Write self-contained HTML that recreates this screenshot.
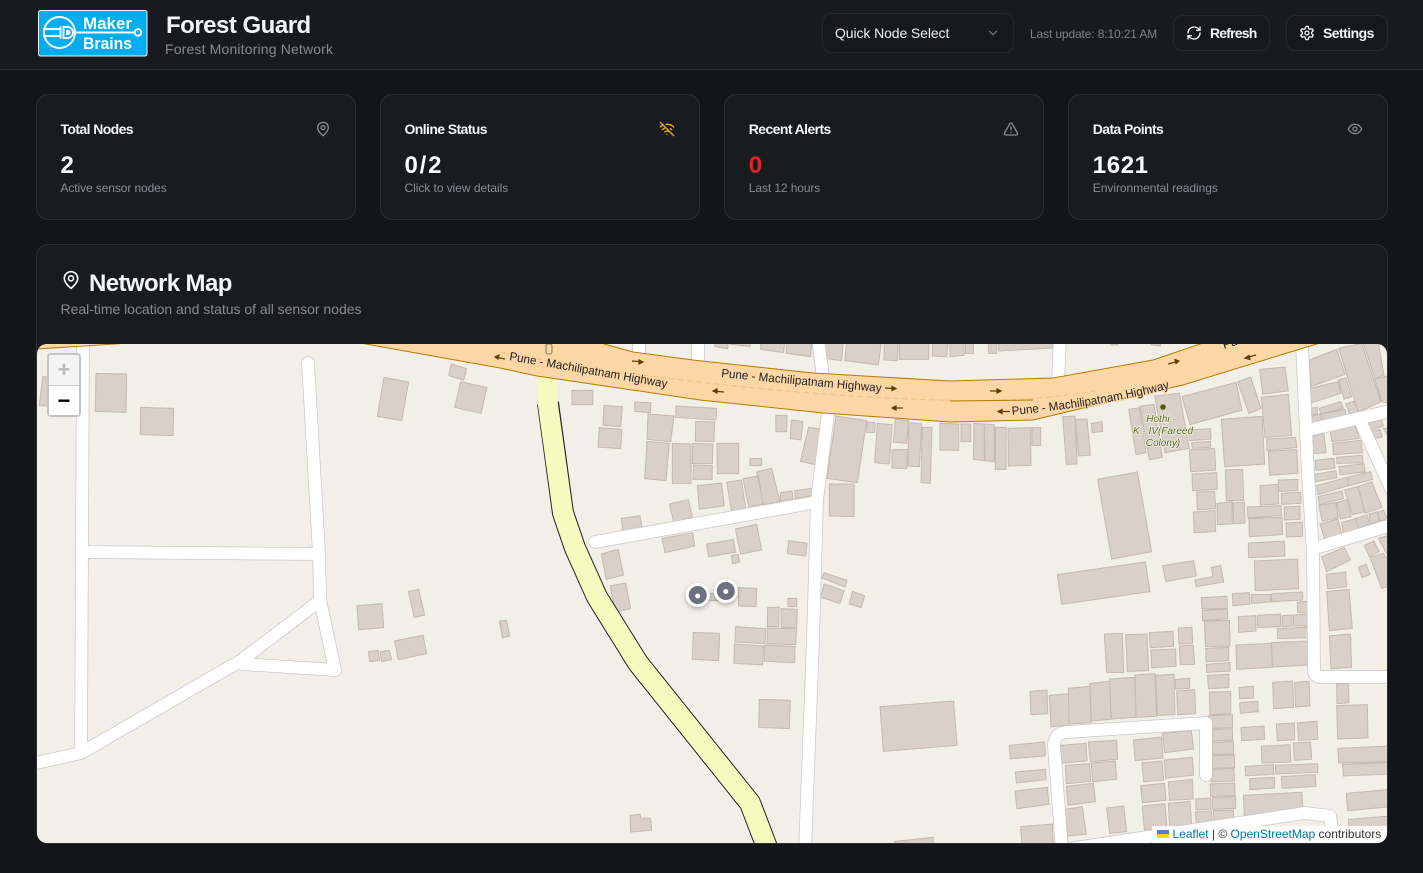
<!DOCTYPE html>
<html lang="en"><head><meta charset="utf-8"><title>Forest Guard</title>
<style>
*{box-sizing:border-box;margin:0;padding:0}
html,body{width:1423px;height:873px;overflow:hidden;background:#131519;font-family:"Liberation Sans",sans-serif;color:#f5f6f7}
.a{position:absolute;white-space:nowrap}
.hdr{left:0;top:0;width:1423px;height:70px;background:#181a1f;border-bottom:1px solid #2a2d33}
.box{border:1px solid #24272d;background:#16181c;border-radius:10px}
.card{top:94px;width:320px;height:126px;background:#181c21;border:1px solid #2a2e35;border-radius:12px}
.ct{font-size:14px;line-height:20px;font-weight:700;letter-spacing:-.6px;top:119px;color:#f3f5f7}
.cv{font-size:24px;line-height:32px;font-weight:700;top:150px;color:#fbfcfd;letter-spacing:.6px}
.cs{font-size:12px;line-height:16px;top:180px;color:#878d97;letter-spacing:-.05px}
svg.i{position:absolute;fill:none;stroke:currentColor;stroke-width:2;stroke-linecap:round;stroke-linejoin:round}
.btn{font-size:14px;font-weight:700;line-height:20px;letter-spacing:-.55px;top:23px;color:#f3f5f7}
.lbl{font:12px "Liberation Sans",sans-serif;fill:#222;paint-order:stroke;stroke:#fcd6a4;stroke-width:2.5px}
.zc{left:47px;top:353px;width:34px;height:64px;border:2px solid #c4c4c4;border-radius:4px;background:#fff;overflow:hidden}
.zc div{height:30px;text-align:center;font:700 22px/34px "Liberation Mono",monospace;color:#000;background:#fff}
.attr{right:36px;top:826px;height:17px;width:235.5px;background:rgba(255,255,255,.85);font-size:12px;line-height:16px;color:#333;padding-left:5px;border-bottom-right-radius:10px}
.attr span{color:#0078a8}
</style></head><body>
<div class="a hdr"></div>

<svg class="a" style="left:38px;top:10px" width="110" height="47" viewBox="38 10 110 47">
<rect x="38.500" y="10.500" width="108.500" height="45.500" rx="2" fill="#00aeef" stroke="#e8f6fd"/>
<g fill="none" stroke="#fff" stroke-width="1.900">
<circle cx="59.500" cy="32.500" r="15.500"/>
<path d="M43 29H60M43 36H60M60.500 26.500V38.500M72 32.500H134"/>
<circle cx="138" cy="32.500" r="3.300"/>
<path d="M63.500 27V38H67.500C70.500 38 73 35.500 73 32.500C73 29.500 70.500 27 67.500 27Z"/>
</g>
<path d="M66 30H68C69.500 30 70.500 31.300 70.500 32.500C70.500 33.700 69.500 35 68 35H66Z" fill="#fff"/>
<text x="83" y="29" font-size="17" font-weight="700" fill="#fff" textLength="49" lengthAdjust="spacingAndGlyphs">Maker</text>
<text x="83" y="49" font-size="17" font-weight="700" fill="#fff" textLength="49" lengthAdjust="spacingAndGlyphs">Brains</text>
</svg>
<div class="a" style="left:166px;top:10px;font-size:24px;line-height:32px;font-weight:700;color:#f4f5f6;letter-spacing:-.5px">Forest Guard</div>
<div class="a" style="left:165px;top:39px;font-size:14px;line-height:20px;color:#858a93;letter-spacing:.16px">Forest Monitoring Network</div>

<div class="a box" style="left:822px;top:13px;width:192px;height:40px"></div>
<div class="a" style="left:835px;top:23px;font-size:14px;line-height:20px;color:#eceef0;letter-spacing:-.1px">Quick Node Select</div>
<svg class="i" style="left:986px;top:26px;color:#7b8089" width="14" height="14" viewBox="0 0 24 24"><path d="m6 9 6 6 6-6"/></svg>
<div class="a" style="left:1030px;top:26px;font-size:12px;line-height:16px;color:#7d828b;letter-spacing:-.13px">Last update: 8:10:21 AM</div>

<div class="a box" style="left:1173px;top:15px;width:97px;height:36px"></div>
<svg class="i" style="left:1186px;top:25px;color:#f3f5f7" width="16" height="16" viewBox="0 0 24 24"><path d="M3 12a9 9 0 0 1 9-9 9.750 9.750 0 0 1 6.740 2.740L21 8"/><path d="M21 3v5h-5"/><path d="M21 12a9 9 0 0 1-9 9 9.750 9.750 0 0 1-6.740-2.740L3 16"/><path d="M8 16H3v5"/></svg>
<div class="a btn" style="left:1210px;letter-spacing:-.8px">Refresh</div>
<div class="a box" style="left:1286px;top:15px;width:102px;height:36px"></div>
<svg class="i" style="left:1299px;top:25px;color:#f3f5f7" width="16" height="16" viewBox="0 0 24 24"><path d="M12.220 2h-.44a2 2 0 0 0-2 2v.18a2 2 0 0 1-1 1.730l-.43.25a2 2 0 0 1-2 0l-.15-.08a2 2 0 0 0-2.730.73l-.22.38a2 2 0 0 0 .73 2.730l.15.1a2 2 0 0 1 1 1.720v.51a2 2 0 0 1-1 1.740l-.15.09a2 2 0 0 0-.73 2.730l.22.38a2 2 0 0 0 2.730.73l.15-.08a2 2 0 0 1 2 0l.43.25a2 2 0 0 1 1 1.730V20a2 2 0 0 0 2 2h.44a2 2 0 0 0 2-2v-.18a2 2 0 0 1 1-1.730l.43-.25a2 2 0 0 1 2 0l.15.08a2 2 0 0 0 2.730-.73l.22-.39a2 2 0 0 0-.73-2.730l-.15-.08a2 2 0 0 1-1-1.740v-.5a2 2 0 0 1 1-1.740l.15-.09a2 2 0 0 0 .73-2.730l-.22-.38a2 2 0 0 0-2.730-.73l-.15.08a2 2 0 0 1-2 0l-.43-.25a2 2 0 0 1-1-1.730V4a2 2 0 0 0-2-2z"/><circle cx="12" cy="12" r="3"/></svg>
<div class="a btn" style="left:1323px">Settings</div>

<div class="a card" style="left:36px"></div>
<div class="a ct" style="left:60.500px">Total Nodes</div>
<svg class="i" style="left:315px;top:121px;color:#858a93" width="16" height="16" viewBox="0 0 24 24"><path d="M20 10c0 6-8 12-8 12s-8-6-8-12a8 8 0 0 1 16 0Z"/><circle cx="12" cy="10" r="3"/></svg>
<div class="a cv" style="left:60.500px">2</div>
<div class="a cs" style="left:60.500px;letter-spacing:-.1px">Active sensor nodes</div>

<div class="a card" style="left:380px"></div>
<div class="a ct" style="left:404.500px">Online Status</div>
<svg class="i" style="left:659px;top:121px;color:#eab308" width="16" height="16" viewBox="0 0 24 24"><path d="M12 20h.01"/><path d="M8.500 16.429a5 5 0 0 1 7 0"/><path d="M5 12.859a10 10 0 0 1 5.170-2.690"/><path d="M19 12.859a10 10 0 0 0-2.007-1.523"/><path d="M2 8.820a15 15 0 0 1 4.177-2.643"/><path d="M22 8.820a15 15 0 0 0-11.288-3.764"/><path d="m2 2 20 20"/></svg>
<div class="a cv" style="left:404.500px;letter-spacing:1.800px">0/2</div>
<div class="a cs" style="left:404.500px">Click to view details</div>

<div class="a card" style="left:724px"></div>
<div class="a ct" style="left:748.800px">Recent Alerts</div>
<svg class="i" style="left:1003px;top:121px;color:#858a93" width="16" height="16" viewBox="0 0 24 24"><path d="m21.730 18-8-14a2 2 0 0 0-3.480 0l-8 14A2 2 0 0 0 4 21h16a2 2 0 0 0 1.730-3"/><path d="M12 9v4"/><path d="M12 17h.01"/></svg>
<div class="a cv" style="left:748.800px;color:#dc2626">0</div>
<div class="a cs" style="left:748.800px;letter-spacing:-.1px">Last 12 hours</div>

<div class="a card" style="left:1068px"></div>
<div class="a ct" style="left:1092.800px">Data Points</div>
<svg class="i" style="left:1347px;top:121px;color:#858a93" width="16" height="16" viewBox="0 0 24 24"><path d="M2 12s3-7 10-7 10 7 10 7-3 7-10 7-10-7-10-7Z"/><circle cx="12" cy="12" r="3"/></svg>
<div class="a cv" style="left:1092.800px">1621</div>
<div class="a cs" style="left:1092.800px">Environmental readings</div>

<div class="a" style="left:36px;top:244px;width:1352px;height:600px;background:#181c21;border:1px solid #2a2e35;border-radius:12px"></div>
<svg class="i" style="left:61px;top:270px;color:#f3f5f7" width="20" height="20" viewBox="0 0 24 24"><path d="M20 10c0 6-8 12-8 12s-8-6-8-12a8 8 0 0 1 16 0Z"/><circle cx="12" cy="10" r="3"/></svg>
<div class="a" style="left:89px;top:268px;font-size:24px;line-height:32px;font-weight:700;letter-spacing:-.6px;color:#f5f6f7">Network Map</div>
<div class="a" style="left:60.500px;top:299px;font-size:14px;line-height:20px;color:#858a93;letter-spacing:-.02px">Real-time location and status of all sensor nodes</div>

<svg class="a" style="left:0;top:0" width="1423" height="873" viewBox="0 0 1423 873">
<defs><clipPath id="mc"><rect x="37" y="344" width="1350" height="499" rx="10"/></clipPath>
<filter id="sh" x="-50%" y="-50%" width="200%" height="200%"><feDropShadow dx="0" dy="2" stdDeviation="2.500" flood-color="#000" flood-opacity=".28"/></filter></defs>
<g clip-path="url(#mc)">
<rect x="37" y="344" width="1350" height="499" fill="#f2efe9"/>

<g fill="#d9d0c9" stroke="#c6b9ad" stroke-width="3">
<path transform="translate(30 340) scale(.33333)" d="M38 110 90 115 85 200 28 197ZM198 100 290 102 288 217 196 214ZM332 202 431 205 429 287 331 284ZM1062 112 1136 126 1115 242 1042 229ZM1264 72 1310 86 1301 120 1256 107ZM1292 125 1371 143 1353 220 1274 202Z"/>
<path transform="translate(30 580) scale(.33333)" d="M981 77 1056 71 1061 143 986 149ZM1135 35 1166 28 1184 105 1153 113ZM1408 126 1429 121 1439 168 1419 173ZM1015 215 1044 211 1049 241 1020 245ZM1050 216 1078 211 1085 239 1055 245ZM1094 183 1179 166 1190 221 1105 239Z"/>
<path transform="translate(500 340) scale(.33333)" d="M645 0 685 0 683 26 645 20ZM690 0 752 0 750 20 690 12ZM783 0 855 0 850 38 782 28ZM860 0 936 0 932 50 858 40ZM975 0 1030 0 1025 62 973 55ZM1040 0 1145 0 1135 75 1035 62ZM1153 0 1195 0 1192 62 1152 60ZM1198 0 1287 0 1286 58 1198 58ZM1298 0 1345 0 1340 50 1297 48ZM216 151 279 151 278 194 216 194ZM312 196 367 200 362 260 309 256ZM404 186 453 188 451 218 404 214ZM528 198 650 205 648 240 527 232ZM444 222 522 228 512 305 441 298ZM587 244 644 246 642 305 586 303ZM298 263 366 268 362 326 294 321ZM441 304 508 310 498 422 434 416ZM517 310 573 312 573 430 517 430ZM578 310 639 312 637 371 577 370ZM580 375 637 377 636 418 579 418ZM651 310 716 310 716 401 652 401ZM750 356 785 355 785 377 750 377ZM827 226 861 226 860 275 828 275ZM874 240 909 244 903 300 871 296ZM926 262 963 268 945 374 901 364ZM1008 228 1100 242 1072 428 981 415ZM1101 246 1125 248 1124 278 1100 277ZM1132 250 1176 254 1168 372 1124 368ZM1186 238 1226 242 1220 310 1180 306ZM1176 330 1224 328 1220 386 1176 384ZM1226 248 1265 252 1258 380 1224 378ZM1267 262 1296 262 1291 430 1263 428ZM988 432 1062 432 1062 530 988 528ZM592 437 665 429 673 498 598 508ZM680 427 724 420 738 510 695 515ZM729 416 775 408 789 492 746 500ZM770 396 815 385 840 485 790 494ZM841 458 876 453 879 477 842 482ZM884 452 936 445 938 466 886 476ZM508 492 565 479 577 530 522 550ZM364 535 420 527 426 565 368 575ZM486 595 578 578 584 618 495 638ZM620 612 700 598 707 637 626 650ZM706 567 770 553 785 630 722 642ZM694 648 714 643 719 667 698 671ZM866 602 921 610 917 648 862 641ZM304 642 354 628 371 705 319 718ZM331 738 377 729 392 806 345 817ZM714 743 770 745 768 800 716 798ZM803 803 837 801 836 860 802 860ZM864 775 890 775 890 800 864 800ZM843 806 892 808 890 862 844 862ZM966 714 972 698 1041 721 1035 741ZM973 732 1032 752 1020 791 961 771ZM1058 754 1094 767 1083 803 1048 792ZM0 842 20 842 29 888 7 893ZM620 760 665 760 665 782 620 782Z"/>
<path transform="translate(520 620) scale(.33333)" d="M520 37 599 40 596 122 517 118ZM647 20 737 26 735 71 645 66ZM742 24 830 26 827 74 741 71ZM643 72 731 78 728 135 642 130ZM735 75 825 79 824 128 733 124ZM718 238 811 241 808 326 716 322ZM1080 260 1301 243 1311 376 1090 394ZM330 586 361 583 362 594 392 595 395 631 332 636ZM1123 664 1240 652 1240 680 1123 680Z"/>
<path transform="translate(950 340) scale(.33333)" d="M0 0 42 0 42 46 0 50ZM47 0 70 0 70 40 46 40ZM115 0 140 0 140 40 116 40ZM145 0 308 0 308 24 146 33ZM480 0 503 0 503 15 482 15ZM601 0 634 0 632 17 603 15ZM-30 250 26 252 26 331 -30 330ZM33 252 62 252 62 305 33 305ZM72 250 103 252 103 362 70 358ZM103 252 133 254 133 365 105 362ZM136 262 168 262 168 388 136 388ZM174 265 242 263 243 376 175 378ZM246 263 272 263 272 316 246 316ZM338 230 375 228 381 372 349 373ZM376 238 411 237 421 345 385 348ZM424 250 456 245 458 274 427 278ZM536 208 568 203 588 338 558 344ZM570 198 612 193 637 352 598 359ZM614 168 688 160 718 325 645 338ZM696 170 858 127 876 210 720 254ZM863 125 902 111 933 205 897 221ZM714 270 782 266 783 297 720 302ZM725 308 781 304 782 322 727 325ZM718 330 794 325 797 390 722 395ZM726 402 800 398 802 448 728 452ZM740 456 794 454 797 506 742 509ZM730 516 795 512 797 575 733 578ZM929 88 1005 81 1015 153 938 162ZM934 172 1015 163 1025 286 945 293ZM814 238 936 229 944 372 824 380ZM950 297 1036 292 1041 322 951 332ZM955 335 1040 328 1044 400 959 406ZM826 390 878 388 881 481 829 482ZM930 437 984 433 986 492 931 495ZM985 420 1043 418 1043 452 986 454ZM994 460 1052 457 1053 490 995 493ZM801 490 846 485 847 552 802 554ZM849 489 883 486 885 549 851 551ZM892 501 993 497 995 527 894 534ZM1003 501 1050 499 1050 538 1003 540ZM897 536 996 532 998 584 898 590ZM1008 549 1057 546 1058 589 1009 591ZM895 609 1003 603 1005 648 896 653ZM913 663 1043 657 1046 746 916 752ZM443 418 562 396 605 635 485 657ZM322 704 586 666 600 755 335 793ZM638 677 731 662 739 708 647 725ZM735 720 788 710 785 682 812 676 821 726 738 740ZM754 773 831 769 832 805 756 807ZM757 812 832 807 833 836 758 842ZM763 844 838 841 840 900 765 900ZM847 761 898 758 900 792 849 797ZM904 764 961 763 963 786 905 790ZM964 761 1058 756 1058 780 966 785ZM1042 787 1074 783 1074 818 1043 818ZM865 830 917 827 918 873 866 877ZM922 826 991 822 992 860 923 863ZM996 827 1026 825 1026 858 997 860ZM1030 825 1074 822 1074 858 1031 858ZM982 866 1074 862 1074 893 983 896ZM1078 60 1160 28 1185 103 1083 140ZM1166 25 1235 10 1293 185 1225 217ZM1240 10 1283 0 1302 105 1275 115ZM1080 145 1165 125 1172 160 1080 190ZM1165 120 1188 113 1205 170 1182 177ZM1275 118 1320 105 1320 190 1296 185ZM1082 205 1102 202 1102 222 1082 225ZM1108 205 1172 185 1180 205 1112 222ZM1187 192 1212 183 1228 220 1200 225ZM1080 230 1110 222 1116 248 1083 252ZM1115 222 1185 208 1188 228 1118 243ZM1085 290 1122 280 1128 338 1089 341ZM1140 272 1215 258 1228 295 1146 305ZM1148 310 1232 301 1238 338 1150 344ZM1160 352 1237 346 1239 368 1161 371ZM1167 380 1242 371 1245 396 1170 404ZM1096 361 1152 355 1155 385 1098 391ZM1094 403 1158 392 1161 413 1096 425ZM1100 437 1192 412 1196 437 1104 464ZM1192 412 1262 395 1268 418 1196 437ZM1104 470 1176 453 1180 475 1108 494ZM1107 497 1157 487 1165 534 1116 543ZM1160 487 1192 478 1203 530 1171 537ZM1184 450 1223 440 1245 515 1207 524ZM1224 440 1265 425 1296 502 1245 520ZM1110 552 1163 537 1176 583 1125 600ZM1175 548 1218 535 1225 565 1180 580ZM1217 535 1252 525 1258 552 1225 565ZM1257 522 1282 515 1288 542 1262 552ZM1283 517 1300 510 1311 535 1291 545ZM1115 650 1183 622 1201 660 1130 695ZM1243 616 1272 603 1287 635 1258 650ZM1260 652 1300 640 1320 670 1320 737 1295 745ZM1285 595 1320 585 1320 660ZM1225 682 1248 673 1260 703 1236 713ZM1129 703 1187 696 1190 740 1133 747ZM1130 755 1197 748 1207 865 1138 872ZM1138 888 1200 882 1203 900 1140 900ZM1250 250 1295 240 1300 258 1255 272ZM1260 275 1290 268 1297 290 1270 297ZM1300 265 1320 265 1320 300ZM1300 372 1320 372 1320 410Z"/>
<path transform="translate(950 620) scale(.33333)" d="M1138 48 1201 42 1205 142 1143 146ZM463 42 517 40 521 157 470 158ZM527 44 591 42 596 152 532 154ZM598 38 669 34 671 79 601 83ZM603 90 677 87 678 139 605 143ZM685 24 726 22 728 71 687 72ZM688 78 730 76 734 133 691 134ZM764 3 838 1 840 78 767 80ZM767 85 836 82 836 122 768 125ZM769 133 840 128 841 153 770 157ZM773 166 836 163 837 203 775 206ZM778 216 842 214 842 282 780 284ZM775 288 847 283 848 322 777 326ZM785 329 847 326 848 360 787 363ZM787 367 850 364 851 402 788 405ZM787 408 853 405 854 442 788 445ZM782 449 852 445 853 483 784 486ZM780 492 854 489 855 526 782 529ZM787 533 856 529 857 565 788 568ZM737 537 782 534 783 568 738 570ZM736 576 785 573 786 606 738 610ZM790 572 850 570 851 600 792 603ZM858 75 964 70 967 142 860 148ZM964 68 1075 63 1075 135 968 141ZM867 202 910 199 911 234 869 236ZM869 248 923 244 925 275 871 280ZM968 187 1028 183 1031 262 971 266ZM1034 187 1077 184 1080 258 1037 261ZM1160 192 1195 192 1197 248 1161 251ZM1160 257 1252 254 1254 354 1163 357ZM873 323 942 318 944 358 875 362ZM979 312 1033 309 1034 359 982 362ZM1042 309 1101 304 1103 358 1046 361ZM934 379 1020 374 1023 426 936 429ZM1030 369 1082 366 1085 418 1033 421ZM885 439 970 434 972 463 887 467ZM976 436 1103 431 1103 457 978 462ZM899 476 973 472 974 504 900 509ZM994 470 1096 464 1098 499 996 505ZM880 526 1056 517 1058 565 883 587ZM1164 385 1320 378 1320 425 1166 429ZM1178 433 1320 427 1320 462 1180 468ZM1189 520 1320 508 1320 560 1193 572ZM1195 598 1320 588 1320 630 1197 630ZM240 214 291 210 293 281 243 284ZM298 226 355 221 358 315 303 320ZM355 205 420 199 423 308 358 312ZM420 190 479 184 483 298 424 303ZM479 177 554 172 558 292 484 297ZM555 165 615 161 620 289 558 292ZM617 166 672 163 675 284 622 286ZM676 178 719 175 719 205 677 207ZM680 213 734 209 737 281 683 284ZM178 376 284 366 286 408 181 416ZM196 456 287 448 288 479 199 489ZM195 513 292 502 297 553 201 566ZM212 620 307 612 310 680 216 680ZM331 376 408 370 411 422 335 430ZM415 366 500 361 503 418 421 425ZM346 436 419 431 422 484 349 491ZM424 429 496 423 500 478 428 485ZM349 499 430 490 437 545 354 556ZM345 568 397 560 409 643 353 648ZM470 564 521 558 530 635 479 640ZM550 360 634 351 639 414 556 422ZM637 340 724 332 731 387 644 398ZM576 428 636 423 641 480 581 485ZM643 420 727 412 731 465 647 475ZM572 497 644 490 648 541 577 548ZM655 486 727 478 730 537 659 541ZM577 558 645 551 651 625 583 630ZM655 550 720 544 725 615 659 620Z"/>
</g>

<!-- white roads -->
<g fill="none" stroke-linecap="round" stroke-linejoin="round">
<path stroke="#c8c8c8" stroke-width="13.500" d="M83 340L81 753M36 763L81 753L242 660L318 602M308 363L319 553L320 600L335 670L242 664M82 552L319 554M595 542L817 502M818 340L828 413L817 500L813 640L805 850M639 335V355M698 335V365M1060 335L1058 385M1302 345L1308 473L1313 553L1314 670Q1314 677 1321 677H1395M1308 430L1395 410M1315 548L1395 524M1362 425L1395 497M1206 775V723L1067 732Q1054 733 1054 746L1062 850L1305 813L1330 816L1333 835"/>
<path stroke="#fff" stroke-width="12" d="M83 340L81 753M36 763L81 753L242 660L318 602M308 363L319 553L320 600L335 670L242 664M82 552L319 554M595 542L817 502M818 340L828 413L817 500L813 640L805 850M639 335V355M698 335V365M1060 335L1058 385M1302 345L1308 473L1313 553L1314 670Q1314 677 1321 677H1395M1308 430L1395 410M1315 548L1395 524M1362 425L1395 497M1206 775V723L1067 732Q1054 733 1054 746L1062 850L1305 813L1330 816L1333 835"/>
</g>

<!-- yellow road -->
<g fill="none" stroke-linejoin="round">
<path stroke="#222" stroke-width="22" d="M548 403L563 513L575 548L597 597L638 663L750 803L768 850"/>
<path stroke="#f7fabf" stroke-width="20" d="M547 370L548 405L563 513L575 548L597 597L638 663L750 803L768 850"/>
</g>

<!-- highway -->
<path d="M346 340 360 343 500 368 537 376 700 400 823 413 950 422 1033 420 1117 400 1183 385 1297 350 1330 340H1210L1203 343 1153 360 1053 378 950 381 813 373 693 360 633 352 590 340Z" fill="#fcd6a4" stroke="#b27c00" stroke-width="1"/>
<path d="M30 350L130 340H30Z" fill="#fcd6a4"/>
<path d="M37 349L130 343" fill="none" stroke="#b27c00"/>
<path d="M500 352C600 372 760 392 890 398C960 402 1040 402 1100 390" fill="none" stroke="#c49a3a" stroke-width="1" stroke-dasharray="6 3" opacity=".3"/>
<path d="M950 401L1033 400" fill="none" stroke="#b27c00" stroke-width="1"/>
<rect x="546" y="344" width="6" height="10" rx="2" fill="none" stroke="#8a7a5a"/>

<!-- arrows -->
<g stroke="#5e3d00" stroke-width="1.200" fill="#5e3d00">
<path d="M495 357L505 359M495 357L499 355 498 359Z"/>
<path d="M632 361L643 362M643 362L639 360 639 364Z"/>
<path d="M713 391L724 392M713 391L717 389 717 393Z"/>
<path d="M885 388L896 388.500M896 388.500L892 386.500 892 390.500Z"/>
<path d="M990 391L1001 391M1001 391L997 389 997 393Z"/>
<path d="M892 408L903 408M892 408L896 406 896 410Z"/>
<path d="M998 411.500L1010 411.500M998 411.500L1002 409.500 1002 413.500Z"/>
<path d="M1168 364L1179 361M1179 361L1175 359.500 1176 363.500Z"/>
<path d="M1245 358L1256 355M1245 358L1249 355.500 1250 359.500Z"/>
</g>

<path id="h1" d="M509 360L668 388" fill="none"/>
<path id="h2" d="M721 377Q800 385 882 392" fill="none"/>
<path id="h3" d="M1012 415Q1100 407 1171 388" fill="none"/>
<path id="h4" d="M1224 349L1256 339" fill="none"/>
<text class="lbl"><textPath href="#h1" textLength="160" lengthAdjust="spacingAndGlyphs">Pune - Machilipatnam Highway</textPath></text>
<text class="lbl"><textPath href="#h2" textLength="161" lengthAdjust="spacingAndGlyphs">Pune - Machilipatnam Highway</textPath></text>
<text class="lbl"><textPath href="#h3" textLength="160" lengthAdjust="spacingAndGlyphs">Pune - Machilipatnam Highway</textPath></text>
<text class="lbl"><textPath href="#h4">Pune</textPath></text>

<circle cx="1163" cy="407" r="2.800" fill="#4c5a0f"/>
<g font-size="10" font-style="italic" fill="#5a6a1a" text-anchor="middle" style="paint-order:stroke" stroke="#fff" stroke-opacity=".7" stroke-width="1.500">
<text x="1161" y="422">Hothi -</text><text x="1163" y="434">K - IV(Fareed</text><text x="1163" y="446">Colony)</text>
</g>

<g filter="url(#sh)">
<circle cx="697.700" cy="595" r="12" fill="#fff"/><circle cx="697.700" cy="595" r="9" fill="#6b7280"/><circle cx="697.700" cy="596" r="2.500" fill="#fff"/>
<circle cx="725.800" cy="591" r="12" fill="#fff"/><circle cx="725.800" cy="591" r="9" fill="#6b7280"/><circle cx="725.800" cy="591.500" r="2.500" fill="#fff"/>
</g>
</g>
</svg>

<div class="a zc"><div style="background:#f4f4f4;color:#bbb;border-bottom:1px solid #ccc;height:31px">+</div><div>−</div></div>
<div class="a attr"><svg width="12" height="8" viewBox="0 0 12 8" style="margin-right:4px"><rect width="12" height="4" fill="#4C7BE1"/><rect y="4" width="12" height="4" fill="#FFD500"/></svg><span>Leaflet</span> | © <span>OpenStreetMap</span> contributors</div>
</body></html>
